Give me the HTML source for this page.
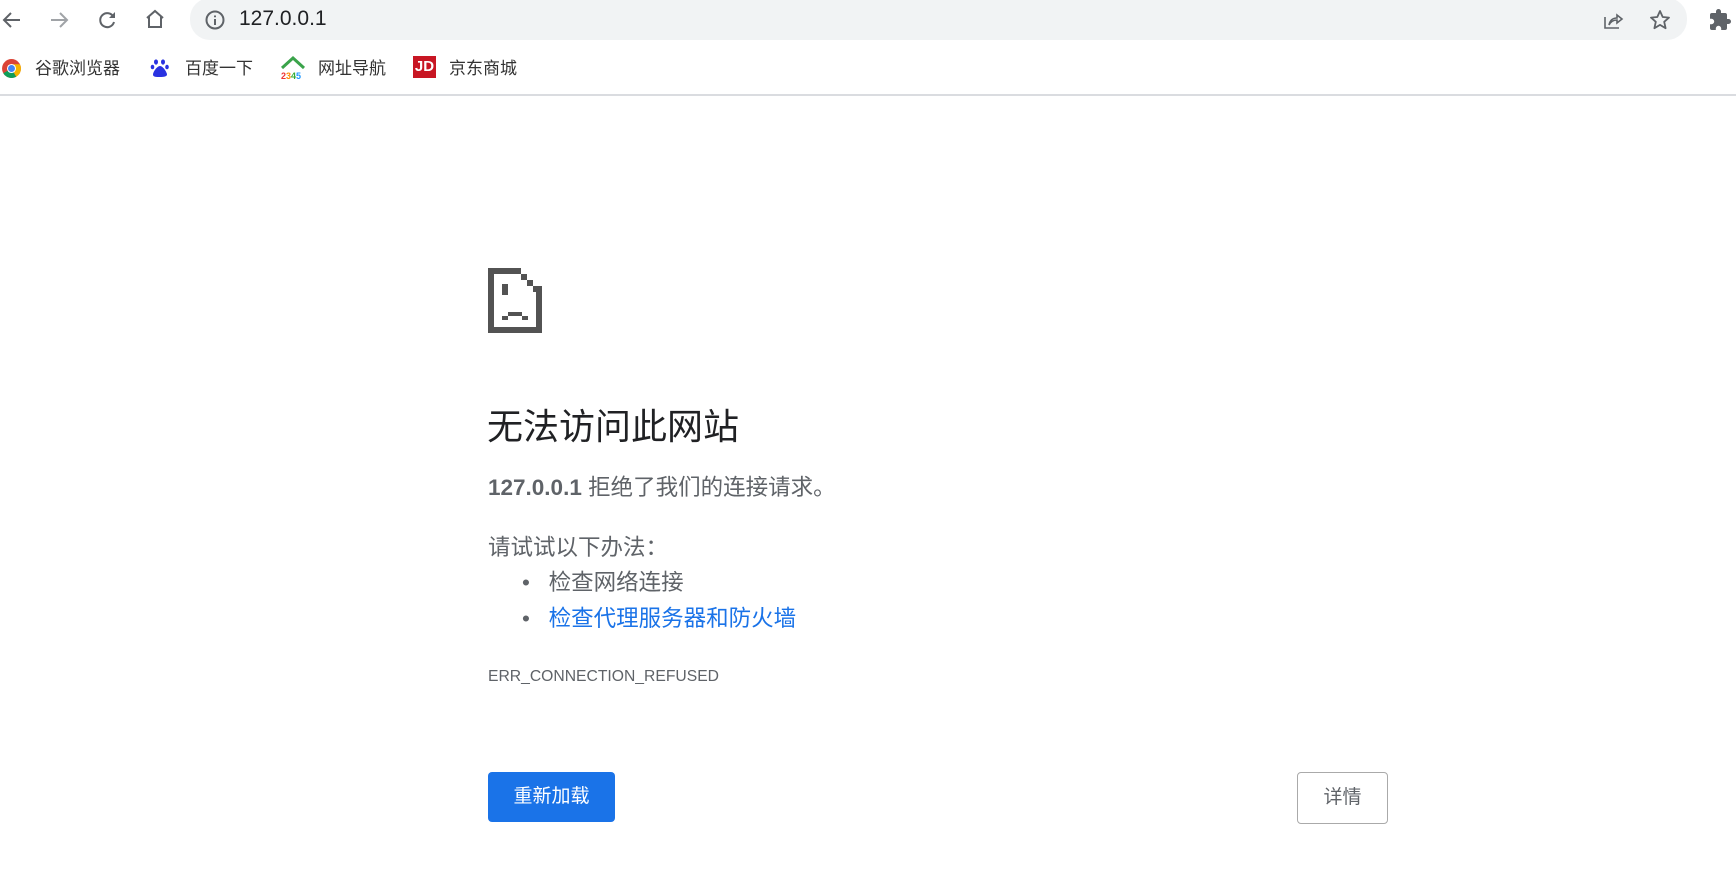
<!DOCTYPE html>
<html><head><meta charset="utf-8"><style>
*{margin:0;padding:0;box-sizing:border-box}
body{width:1736px;height:892px;background:#fff;font-family:"Liberation Sans","Noto Sans CJK SC",sans-serif;position:relative;overflow:hidden;color:#202124}
.a{position:absolute}
.pill{left:190px;top:-2px;width:1497px;height:42px;background:#f1f3f4;border-radius:20px}
.bm{font-size:17px;color:#333;top:57px;line-height:24px}
.main{color:#5f6368}
</style></head><body>
<svg class="a" style="left:0;top:8px" width="24" height="24" viewBox="0 0 24 24"><path d="M20 12H5M11 5l-7 7 7 7" fill="none" stroke="#5f6368" stroke-width="2"/></svg>
<svg class="a" style="left:47px;top:8px" width="24" height="24" viewBox="0 0 24 24"><path d="M4 12h15M13 5l7 7-7 7" fill="none" stroke="#a0a3a7" stroke-width="2"/></svg>
<svg class="a" style="left:95px;top:8px" width="24" height="24" viewBox="0 0 24 24"><path d="M18.5 9A7 7 0 1 0 19 14" fill="none" stroke="#5f6368" stroke-width="2"/><path d="M20 4v6h-6z" fill="#5f6368"/></svg>
<svg class="a" style="left:143px;top:7px" width="24" height="24" viewBox="0 0 24 24"><path d="M4 11l8-7 8 7M6 9.5V20h12V9.5" fill="none" stroke="#5f6368" stroke-width="2"/></svg>
<div class="a pill"></div>
<svg class="a" style="left:204px;top:9px" width="22" height="22" viewBox="0 0 22 22"><circle cx="11" cy="11" r="8.5" fill="none" stroke="#5f6368" stroke-width="2"/><path d="M11 10v6M11 6.5v1.8" stroke="#5f6368" stroke-width="2"/></svg>
<div class="a" style="left:239px;top:7px;font-size:21px;color:#202124">127.0.0.1</div>
<svg class="a" style="left:1601px;top:8px" width="24" height="24" viewBox="0 0 24 24"><path d="M4 9v11h14M8 17c1-5 4-7 8-7V7l5 4-5 4v-3c-3 0-6 1-8 5z" fill="none" stroke="#5f6368" stroke-width="1.6"/></svg>
<svg class="a" style="left:1648px;top:8px" width="24" height="24" viewBox="0 0 24 24"><path d="M12 3l2.7 6 6.3.6-4.8 4.2 1.4 6.4L12 16.9 6.4 20.2l1.4-6.4L3 9.6l6.3-.6z" fill="none" stroke="#5f6368" stroke-width="1.8" stroke-linejoin="round"/></svg>
<svg class="a" style="left:1708px;top:8px" width="24" height="24" viewBox="0 0 24 24"><path d="M20.5 11H19V7a2 2 0 0 0-2-2h-4V3.5a2.5 2.5 0 0 0-5 0V5H4a2 2 0 0 0-2 2v3.8h1.5a2.7 2.7 0 0 1 0 5.4H2V20a2 2 0 0 0 2 2h3.8v-1.5a2.7 2.7 0 0 1 5.4 0V22H17a2 2 0 0 0 2-2v-4h1.5a2.5 2.5 0 0 0 0-5z" fill="#5f6368"/></svg>
<svg class="a" style="left:1px;top:58px" width="21" height="21" viewBox="0 0 20 20"><circle cx="10" cy="10" r="9" fill="#db4437"/><path d="M10 10L2.2 14.5A9 9 0 0 0 14.5 17.8z" fill="#0f9d58"/><path d="M10 10l4.5 7.8A9 9 0 0 0 19 10z" fill="#f4b400"/><path d="M10 10H19A9 9 0 0 0 18 6H10z" fill="#f4b400"/><circle cx="10" cy="10" r="4.3" fill="#fff"/><circle cx="10" cy="10" r="3.3" fill="#4285f4"/></svg>
<div class="a bm" style="left:35px">谷歌浏览器</div>
<svg class="a" style="left:150px;top:58px" width="20" height="20" viewBox="0 0 20 20" fill="#2932e1"><ellipse cx="6" cy="4" rx="2" ry="2.6"/><ellipse cx="13" cy="4" rx="2" ry="2.6"/><ellipse cx="2.5" cy="9" rx="1.8" ry="2.3"/><ellipse cx="17" cy="9" rx="1.8" ry="2.3"/><path d="M10 8c-3 0-7 6-7 8.5S6 19 10 19s7-.5 7-2.5S13 8 10 8z"/></svg>
<div class="a bm" style="left:185px">百度一下</div>
<svg class="a" style="left:280px;top:54px" width="26" height="26" viewBox="0 0 26 26"><path d="M2 14L13 4l11 10" fill="none" stroke="#3aa34a" stroke-width="3"/><text x="1" y="25" font-size="9" font-weight="bold" fill="#e33" font-family="Liberation Sans">2<tspan fill="#f80">3</tspan><tspan fill="#3a3">4</tspan><tspan fill="#29f">5</tspan></text></svg>
<div class="a bm" style="left:318px">网址导航</div>
<div class="a" style="left:413px;top:56px;width:23px;height:22px;background:#c81623;color:#fff;font-size:15px;font-weight:bold;text-align:center;line-height:22px">JD</div>
<div class="a bm" style="left:449px">京东商城</div>
<div class="a" style="left:0;top:94px;width:1736px;height:2px;background:#dadce0"></div>
<svg class="a" style="left:488px;top:268px" width="54" height="65" viewBox="0 0 54 65" shape-rendering="crispEdges" fill="#535353"><path d="M0 0h33v6h-27v53h42v-35h6v41h-54z"/><rect x="33" y="6" width="6" height="6"/><rect x="39" y="12" width="6" height="6"/><rect x="45" y="18" width="9" height="6"/><rect x="14" y="16" width="6" height="11"/><rect x="14" y="48" width="6" height="4"/><rect x="34" y="48" width="6" height="4"/><rect x="20" y="44" width="14" height="4"/></svg>
<div class="a" style="left:487px;top:404px;font-size:36px;color:#202124;line-height:46px">无法访问此网站</div>
<div class="a main" style="left:488px;top:474px;font-size:22.5px;line-height:28px"><b>127.0.0.1</b> 拒绝了我们的连接请求。</div>
<div class="a main" style="left:488px;top:534px;font-size:22.5px;line-height:28px">请试试以下办法：</div>
<div class="a main" style="left:522px;top:569px;font-size:22.5px;line-height:28px">•&nbsp;&nbsp;&nbsp;检查网络连接</div>
<div class="a main" style="left:522px;top:605px;font-size:22.5px;line-height:28px">•&nbsp;&nbsp;&nbsp;<span style="color:#1a73e8">检查代理服务器和防火墙</span></div>
<div class="a main" style="left:488px;top:667px;font-size:15.7px;line-height:20px">ERR_CONNECTION_REFUSED</div>
<div class="a" style="left:488px;top:772px;width:127px;height:50px;background:#1a73e8;border-radius:4px;color:#fff;font-size:19px;text-align:center;line-height:50px">重新加载</div>
<div class="a" style="left:1297px;top:772px;width:91px;height:52px;border:1px solid #aaa;border-radius:4px;color:#5f6368;font-size:19px;text-align:center;line-height:50px">详情</div>
</body></html>
